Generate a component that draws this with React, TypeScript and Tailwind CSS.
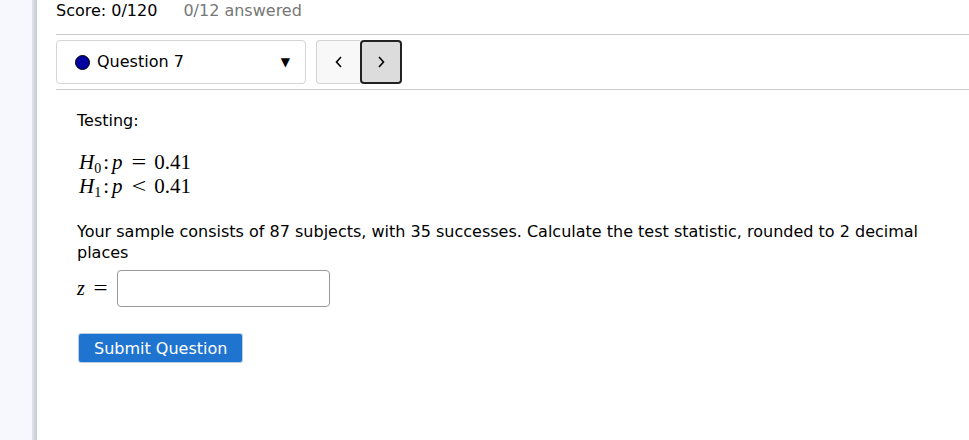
import React from "react";

const sans = { fontFamily: '"DejaVu Sans", sans-serif' };
const serif = { fontFamily: '"Liberation Serif", serif' };

export default function App() {
  return (
    <div className="flex min-h-[440px] w-[969px] bg-white text-black" style={sans}>
      <div className="w-[32px] shrink-0 bg-[#f7f8fe]" />
      <div className="w-[5px] shrink-0 bg-gradient-to-r from-[#e2e3ea] to-[#c9cad1]" />
      <div className="flex-1 pl-[19px]">
        <div className="flex h-[35px] items-start gap-[26px] border-b border-[#cccccc] pt-[1px] text-[16px] leading-[20px]">
          <span>Score: 0/120</span>
          <span className="text-[#777777]">0/12 answered</span>
        </div>
        <div className="flex items-center gap-[10px] border-b border-[#cccccc] py-[5px]">
          <div className="flex h-[44px] w-[250px] items-center rounded-[4px] border border-[#d4d4d4] px-[18px] text-[16px]">
            <span className="mr-[7px] inline-block h-[15px] w-[15px] rounded-full border border-black bg-[#0000a0]" />
            <span>Question 7</span>
            <span className="ml-auto mr-[-3px] text-[12px]">▼</span>
          </div>
          <div className="flex h-[44px]">
            <button className="flex h-[44px] w-[44px] items-center justify-center rounded-l-[4px] border border-r-0 border-[#d4d4d4] bg-[#f8f8f8]">
              <svg width="10" height="14" viewBox="0 0 10 14"><path d="M7 2 L2.5 7 L7 12" fill="none" stroke="#000" strokeWidth="1.6" /></svg>
            </button>
            <button className="flex h-[44px] w-[42px] items-center justify-center rounded-[4px] border-2 border-[#222222] bg-[#dcdcdc]">
              <svg width="10" height="14" viewBox="0 0 10 14"><path d="M3 2 L7.5 7 L3 12" fill="none" stroke="#000" strokeWidth="1.6" /></svg>
            </button>
          </div>
        </div>
        <div className="pl-[21px] pr-[30px] pt-[20px] text-[16px] leading-[21px]">
          <p>Testing:</p>
          <div className="mt-[19px] pl-[2px] text-[21px] leading-[24px]" style={serif}>
            <div><i>H</i><sub className="text-[14px]">0</sub><span className="ml-[2px] mr-[3px]">:</span><i>p</i><span className="mx-[10px] inline-block scale-x-125">=</span>0.41</div>
            <div><i>H</i><sub className="text-[14px]">1</sub><span className="ml-[2px] mr-[3px]">:</span><i>p</i><span className="mx-[10px] inline-block scale-x-125">&lt;</span>0.41</div>
          </div>
          <p className="mt-[23px]">Your sample consists of 87 subjects, with 35 successes. Calculate the test statistic, rounded to 2 decimal places</p>
          <div className="mt-[7px] flex items-center">
            <span className="text-[20px]" style={serif}><i>z</i><span className="ml-[10px] mr-[11px] inline-block scale-x-125">=</span></span>
            <input className="h-[37px] w-[213px] rounded-[4px] border border-[#999999] bg-white" />
          </div>
          <button className="ml-[1px] mt-[26px] h-[30px] rounded-[3px] border border-[#b8cde6] bg-[#1f74d0] px-[15px] text-[16px] text-white">Submit Question</button>
        </div>
      </div>
    </div>
  );
}
